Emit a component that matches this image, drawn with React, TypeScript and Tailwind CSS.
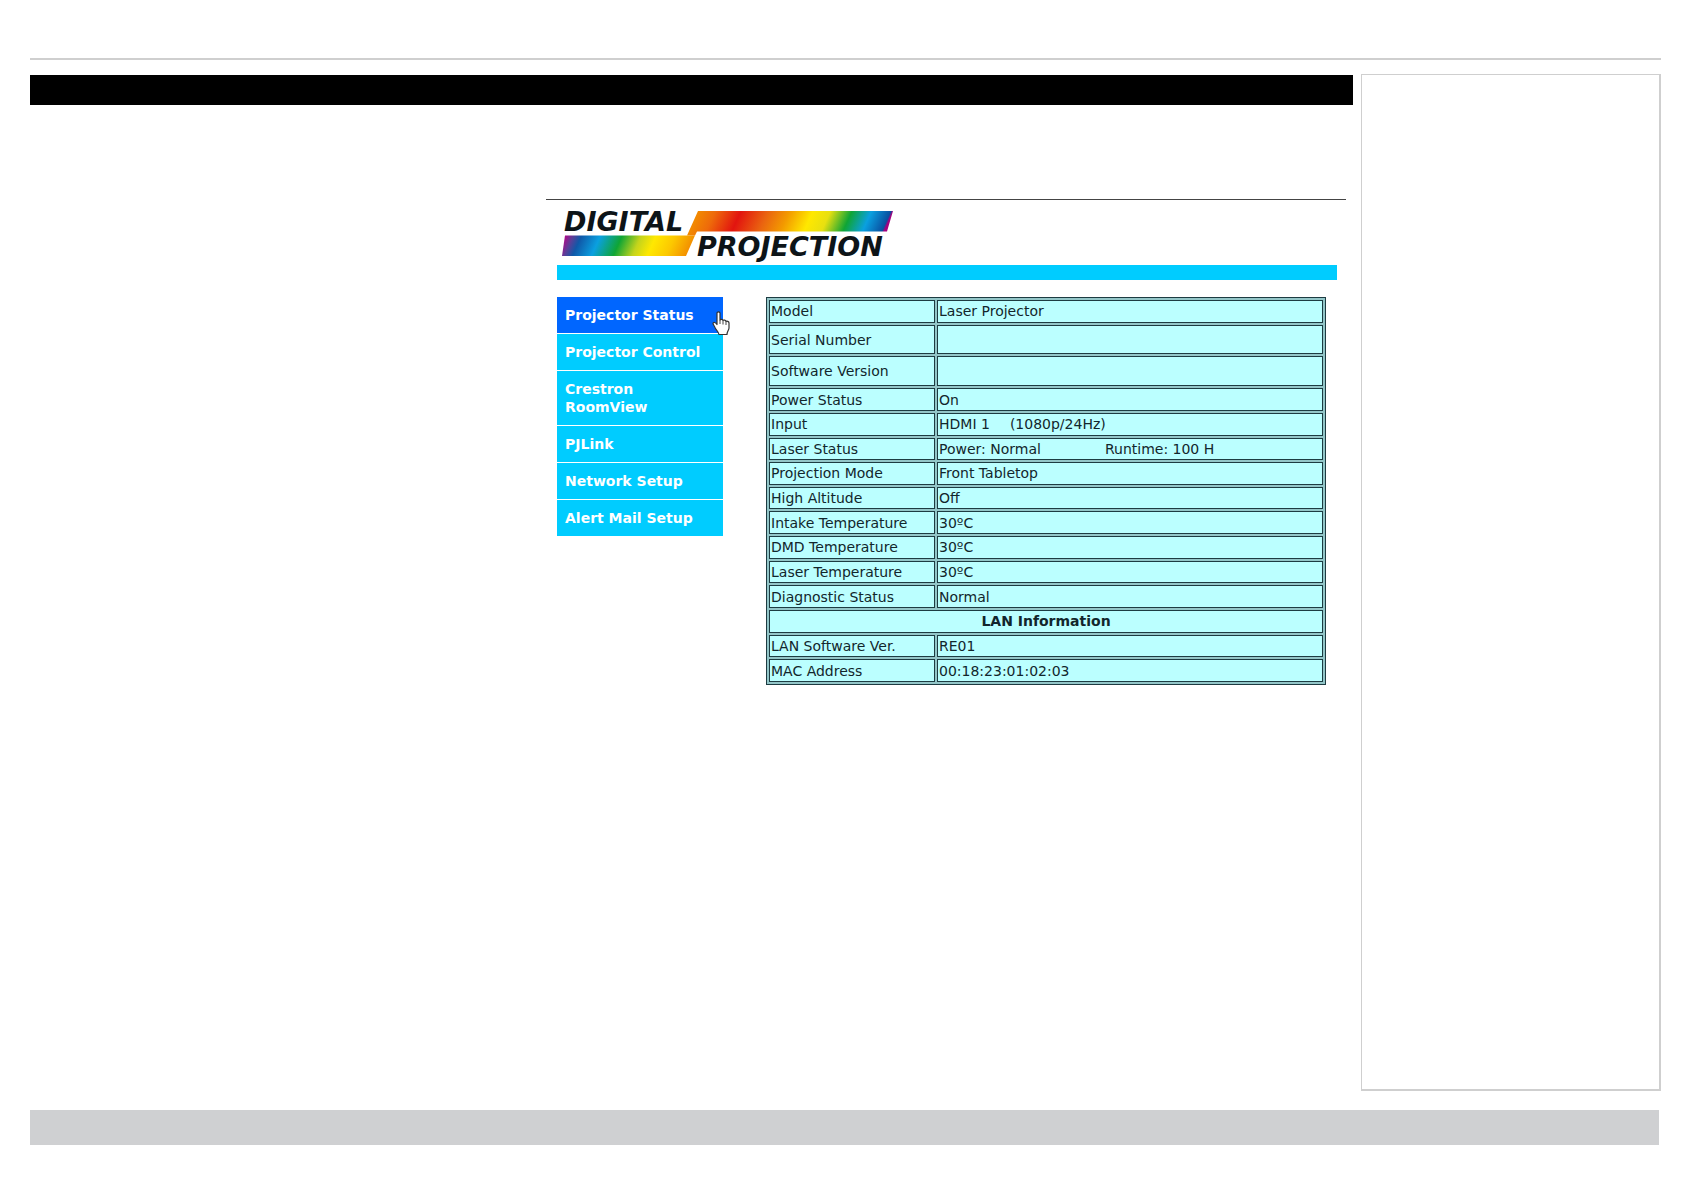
const navItems = [
  { label: "Projector Status", href: "#status", active: true },
  { label: "Projector Control", href: "#control" },
  { label: "Crestron RoomView", href: "#crestron" },
  { label: "PJLink", href: "#pjlink" },
  { label: "Network Setup", href: "#network" },
  { label: "Alert Mail Setup", href: "#alert" },
]

const statusRows = [
  { label: "Model", values: ["Laser Projector"] },
  { label: "Serial Number", values: [], tall: true },
  { label: "Software Version", values: [], tall: true },
  { label: "Power Status", values: ["On"] },
  { label: "Input", values: ["HDMI 1", "(1080p/24Hz)"], gap: "gap-5" },
  { label: "Laser Status", values: ["Power: Normal", "Runtime: 100 H"], gap: "gap-16" },
  { label: "Projection Mode", values: ["Front Tabletop"] },
  { label: "High Altitude", values: ["Off"] },
  { label: "Intake Temperature", values: ["30ºC"] },
  { label: "DMD Temperature", values: ["30ºC"] },
  { label: "Laser Temperature", values: ["30ºC"] },
  { label: "Diagnostic Status", values: ["Normal"] },
]

const lanRows = [
  { label: "LAN Software Ver.", values: ["RE01"] },
  { label: "MAC Address", values: ["00:18:23:01:02:03"] },
]

type Row = { label: string; values: string[]; gap?: string; tall?: boolean }

function StatusRow({ label, values, gap = "", tall }: Row) {
  return (
    <tr className={tall ? "h-[29px]" : "h-[22px]"}>
      <th scope="row" className="w-[166px] border border-[#1d3c42] bg-[#bbffff] px-px text-left font-normal">
        {label}
      </th>
      <td className="border border-[#1d3c42] bg-[#bbffff] px-px">
        <span className={`flex ${gap}`}>
          {values.map((value) => (
            <span key={value}>{value}</span>
          ))}
        </span>
      </td>
    </tr>
  )
}

function Logo() {
  return (
    <svg width="332" height="62" viewBox="0 -8 332 62" role="img" aria-label="Digital Projection">
      <defs>
        <linearGradient id="upper" gradientUnits="userSpaceOnUse" x1="136" y1="0" x2="331" y2="0" gradientTransform="skewX(-24)">
          <stop offset="0" stopColor="#f28a00" />
          <stop offset="0.09" stopColor="#ee6a0a" />
          <stop offset="0.22" stopColor="#e2140f" />
          <stop offset="0.36" stopColor="#ea6410" />
          <stop offset="0.47" stopColor="#f39a00" />
          <stop offset="0.59" stopColor="#ffe800" />
          <stop offset="0.68" stopColor="#e8e010" />
          <stop offset="0.79" stopColor="#0fa535" />
          <stop offset="0.89" stopColor="#0aa0e0" />
          <stop offset="0.99" stopColor="#0a4fa0" />
          <stop offset="1" stopColor="#a3007f" />
        </linearGradient>
        <linearGradient id="lower" gradientUnits="userSpaceOnUse" x1="10" y1="0" x2="146" y2="0" gradientTransform="skewX(-24)">
          <stop offset="0.04" stopColor="#a3128a" />
          <stop offset="0.09" stopColor="#5a3f98" />
          <stop offset="0.15" stopColor="#1058a8" />
          <stop offset="0.29" stopColor="#0aa0e0" />
          <stop offset="0.45" stopColor="#0fa535" />
          <stop offset="0.59" stopColor="#c4d41c" />
          <stop offset="0.7" stopColor="#ffe800" />
          <stop offset="0.84" stopColor="#fcc800" />
          <stop offset="1" stopColor="#f28a00" />
        </linearGradient>
      </defs>
      <path d="M136 0H331L325 20.500H135L133 24.500H125Z" fill="url(#upper)" />
      <path d="M3 24.500H133L124 45H0Z" fill="url(#lower)" />
      <g fill="#0d1418" fontFamily="DejaVu Sans, sans-serif" fontSize="27" fontWeight="700" fontStyle="italic">
        <text x="2" y="20">DIGITAL</text>
        <text x="135" y="45">PROJECTION</text>
      </g>
    </svg>
  )
}

function HandPointer() {
  return (
    <svg className="absolute top-[14px] left-[155px]" width="18" height="25" viewBox="0 0 18 25" aria-hidden="true">
      <path
        d="M5 2C5 .6 8 .6 8 2V9C8.500 8 11 8 11 9.500C11.500 8.700 14 9 14 10.500C14.700 9.800 17 10.300 17 12V17C17 19 15 20.500 15 23.500H7C6.500 20.500 4 19 3 16.500C2.500 15 1 13.500 1 12.500C1 11 3.500 11 5 13.500Z"
        fill="#fff"
        stroke="#333"
        strokeWidth="1.200"
        strokeLinejoin="round"
      />
      <path d="M8 9V13M11 9.500V13.500M14 10.500V14" fill="none" stroke="#444" strokeWidth="1" />
    </svg>
  )
}

export default function App() {
  return (
    <div className="flex min-h-screen flex-col bg-white pt-[58px] pr-[23px] pb-[46px] pl-[30px] font-['DejaVu_Sans',sans-serif]">
      <header className="border-t-2 border-[#cfcfcf]" />

      <div className="mt-[14px] flex flex-1 gap-2">
        <main className="min-w-0 flex-1 pt-px">
          <div className="h-[30px] bg-black" />

          {/* Projector web page */}
          <section className="mt-[94px] mr-[7px] ml-auto max-w-[800px] border-t border-[#444] pr-[9px] pl-[11px]">
            <div className="pt-[3px] pl-[5px]">
              <Logo />
            </div>
            <div className="h-[15px] bg-[#00ccff]" />

            <div className="mt-[17px] flex items-start gap-[43px]">
              <nav className="relative flex w-[166px] shrink-0 flex-col gap-px">
                {navItems.map((item) => (
                  <a
                    key={item.label}
                    href={item.href}
                    className={`py-[9px] pr-5 pl-2 text-sm leading-[18px] font-bold text-white ${
                      item.active ? "bg-[#0066ff]" : "bg-[#00ccff]"
                    }`}
                  >
                    {item.label}
                  </a>
                ))}
                <HandPointer />
              </nav>

              <table className="mr-[11px] h-[388px] flex-1 table-fixed border-separate border-spacing-[2px] border border-[#1d3c42] bg-[#93c6c8] text-sm leading-[18px] text-[#12262c]">
                <tbody>
                  {statusRows.map((row) => (
                    <StatusRow key={row.label} {...row} />
                  ))}
                  <tr className="h-[22px]">
                    <th colSpan={2} className="border border-[#1d3c42] bg-[#bbffff] px-px text-center font-bold">
                      LAN Information
                    </th>
                  </tr>
                  {lanRows.map((row) => (
                    <StatusRow key={row.label} {...row} />
                  ))}
                </tbody>
              </table>
            </div>
          </section>
        </main>

        <aside className="w-[300px] shrink-0 border-t border-r-2 border-b-2 border-l border-[#cfcfcf]" />
      </div>

      <footer className="mt-[19px] mr-[2px] h-[35px] bg-[#cfd0d2]" />
    </div>
  )
}
